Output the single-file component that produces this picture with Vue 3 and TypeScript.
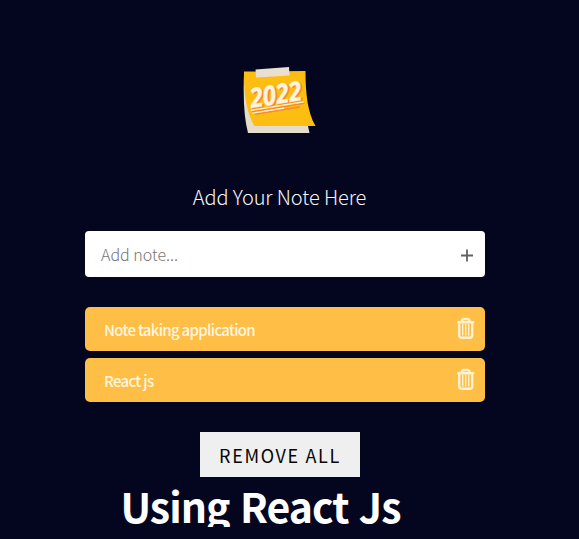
<script setup lang="ts">
import { ref } from 'vue'

interface Note {
  id: number
  text: string
}

const draft = ref('')
const nextId = ref(3)
const notes = ref<Note[]>([
  { id: 1, text: 'Note taking application' },
  { id: 2, text: 'React js' },
])

function addNote(): void {
  const text = draft.value.trim()
  if (!text) return
  notes.value.push({ id: nextId.value++, text })
  draft.value = ''
}

function removeNote(id: number): void {
  notes.value = notes.value.filter((note) => note.id !== id)
}

function removeAll(): void {
  notes.value = []
}
</script>

<template>
  <main class="page">
    <svg class="logo" viewBox="0 0 76 70" aria-hidden="true">
      <path d="M2 8 Q0.500 48 6 68 L67.500 68 L64 52 L20 8Z" fill="#e5ddcb" />
      <path d="M2 6.500 L63.500 6 C63.500 30 66 48 73.500 61 L12.500 61 Q1.500 43 2 6.500Z" fill="#fdbe11" />
      <path d="M13.500 4.500 L47 2 L47.500 10.500 L14 12.500Z" fill="#e9e0cf" />
      <g transform="translate(9.500 43) rotate(-9)">
        <text class="year shade" x="1.600" y="1.200" textLength="52" lengthAdjust="spacingAndGlyphs">2022</text>
        <text class="year" x="0" y="0" textLength="52" lengthAdjust="spacingAndGlyphs">2022</text>
        <path d="M0 3.600H53M2 6.600H48" stroke="#f58a38" stroke-width="1.500" />
        <path d="M-1 2.200H52.500M0 5.200H32" stroke="#fff0d6" stroke-width="1.300" />
      </g>
    </svg>
    <h1 class="title">Add Your Note Here</h1>
    <form class="entry" @submit.prevent="addNote">
      <input v-model="draft" class="field" type="text" placeholder="Add note..." />
      <button class="icon-button" type="submit" aria-label="Add">
        <svg class="plus" width="12" height="13" viewBox="0 0 12 13">
          <path d="M6 0.500V12.500M0 6.500H12" />
        </svg>
      </button>
    </form>
    <ul class="notes">
      <li v-for="note in notes" :key="note.id" class="note">
        <span class="note-text">{{ note.text }}</span>
        <button class="icon-button" type="button" aria-label="Remove" @click="removeNote(note.id)">
          <svg class="trash" width="18" height="24" viewBox="0 0 18 24">
            <path d="M1.200 5.200H16.200M4.500 4.700Q5 2 7 2H10.300Q12.300 2 12.800 4.700M2.200 5.200V18.300Q2.200 20.800 4.700 20.800H12.700Q15.200 20.800 15.200 18.300V5.200" />
            <path class="bars" d="M5.700 7.500V18M8.700 7.500V18M11.700 7.500V18" />
          </svg>
        </button>
      </li>
    </ul>
    <button class="clear" type="button" @click="removeAll">REMOVE ALL</button>
    <p class="caption">Using React Js</p>
  </main>
</template>

<style>
body {
  background: #04061f;
}
</style>

<style scoped>
.page {
  box-sizing: border-box;
  width: 579px;
  height: 539px;
  padding: 65px 94px 0 85px;
  display: flex;
  flex-direction: column;
  align-items: center;
  overflow: hidden;
  background: #04061f;
  font-family: "Noto Sans CJK SC", "Open Sans", sans-serif;
}
.logo {
  width: 76px;
  height: 70px;
  margin-right: 10px;
  flex: none;
}
.year {
  font: italic 700 27px "Open Sans", sans-serif;
  fill: #fff3df;
  stroke: #fff3df;
  stroke-width: 0.4;
}
.shade {
  fill: #f58a38;
  stroke: #f58a38;
}
.title {
  margin: 45px 11px 0 0;
  height: 34px;
  line-height: 34px;
  font-size: 20px;
  font-weight: 300;
  letter-spacing: -0.1px;
  color: #f6f6fb;
  white-space: nowrap;
}
.entry {
  box-sizing: border-box;
  width: 400px;
  height: 46px;
  margin-top: 17px;
  padding: 0 12px 0 16px;
  display: flex;
  align-items: center;
  flex: none;
  border-radius: 4px;
  background: #fff;
}
.field {
  flex: 1;
  min-width: 0;
  height: 44px;
  padding: 0;
  border: 0;
  outline: 0;
  background: none;
  font: 300 16px "Noto Sans CJK SC", "Open Sans", sans-serif;
  color: #333;
}
.field::placeholder {
  color: #757575;
  opacity: 1;
}
.icon-button {
  display: flex;
  padding: 0;
  border: 0;
  background: none;
  cursor: pointer;
}
.plus {
  margin-top: 2px;
  fill: none;
  stroke: #606363;
  stroke-width: 1.8;
}
.notes {
  width: 400px;
  margin: 30px 0 0;
  padding: 0;
  list-style: none;
  display: flex;
  flex-direction: column;
  gap: 7px;
}
.note {
  box-sizing: border-box;
  height: 44px;
  padding: 0 10px 0 19px;
  display: flex;
  align-items: center;
  justify-content: space-between;
  border-radius: 5px;
  background: #ffbe46;
}
.note-text {
  padding-top: 1px;
  font-size: 15px;
  font-weight: 500;
  line-height: 24px;
  letter-spacing: -0.7px;
  color: #fff6e0;
}
.trash {
  fill: none;
  stroke: #fff2d2;
  stroke-width: 2.4;
  stroke-linejoin: round;
  stroke-linecap: round;
}
.bars {
  stroke-width: 1.4;
}
.clear {
  width: 160px;
  height: 45px;
  margin: 30px 10px 0 0;
  padding: 0;
  flex: none;
  border: 0;
  background: #efefef;
  color: #050505;
  font: 400 18px "Noto Sans CJK SC", "Open Sans", sans-serif;
  letter-spacing: 1.65px;
  cursor: pointer;
}
.caption {
  margin: 0 49px 0 0;
  height: 50px;
  flex: none;
  overflow: hidden;
  font-size: 41px;
  font-weight: 700;
  line-height: 57px;
  letter-spacing: -0.95px;
  word-spacing: 2px;
  color: #fff;
  white-space: nowrap;
}
</style>
